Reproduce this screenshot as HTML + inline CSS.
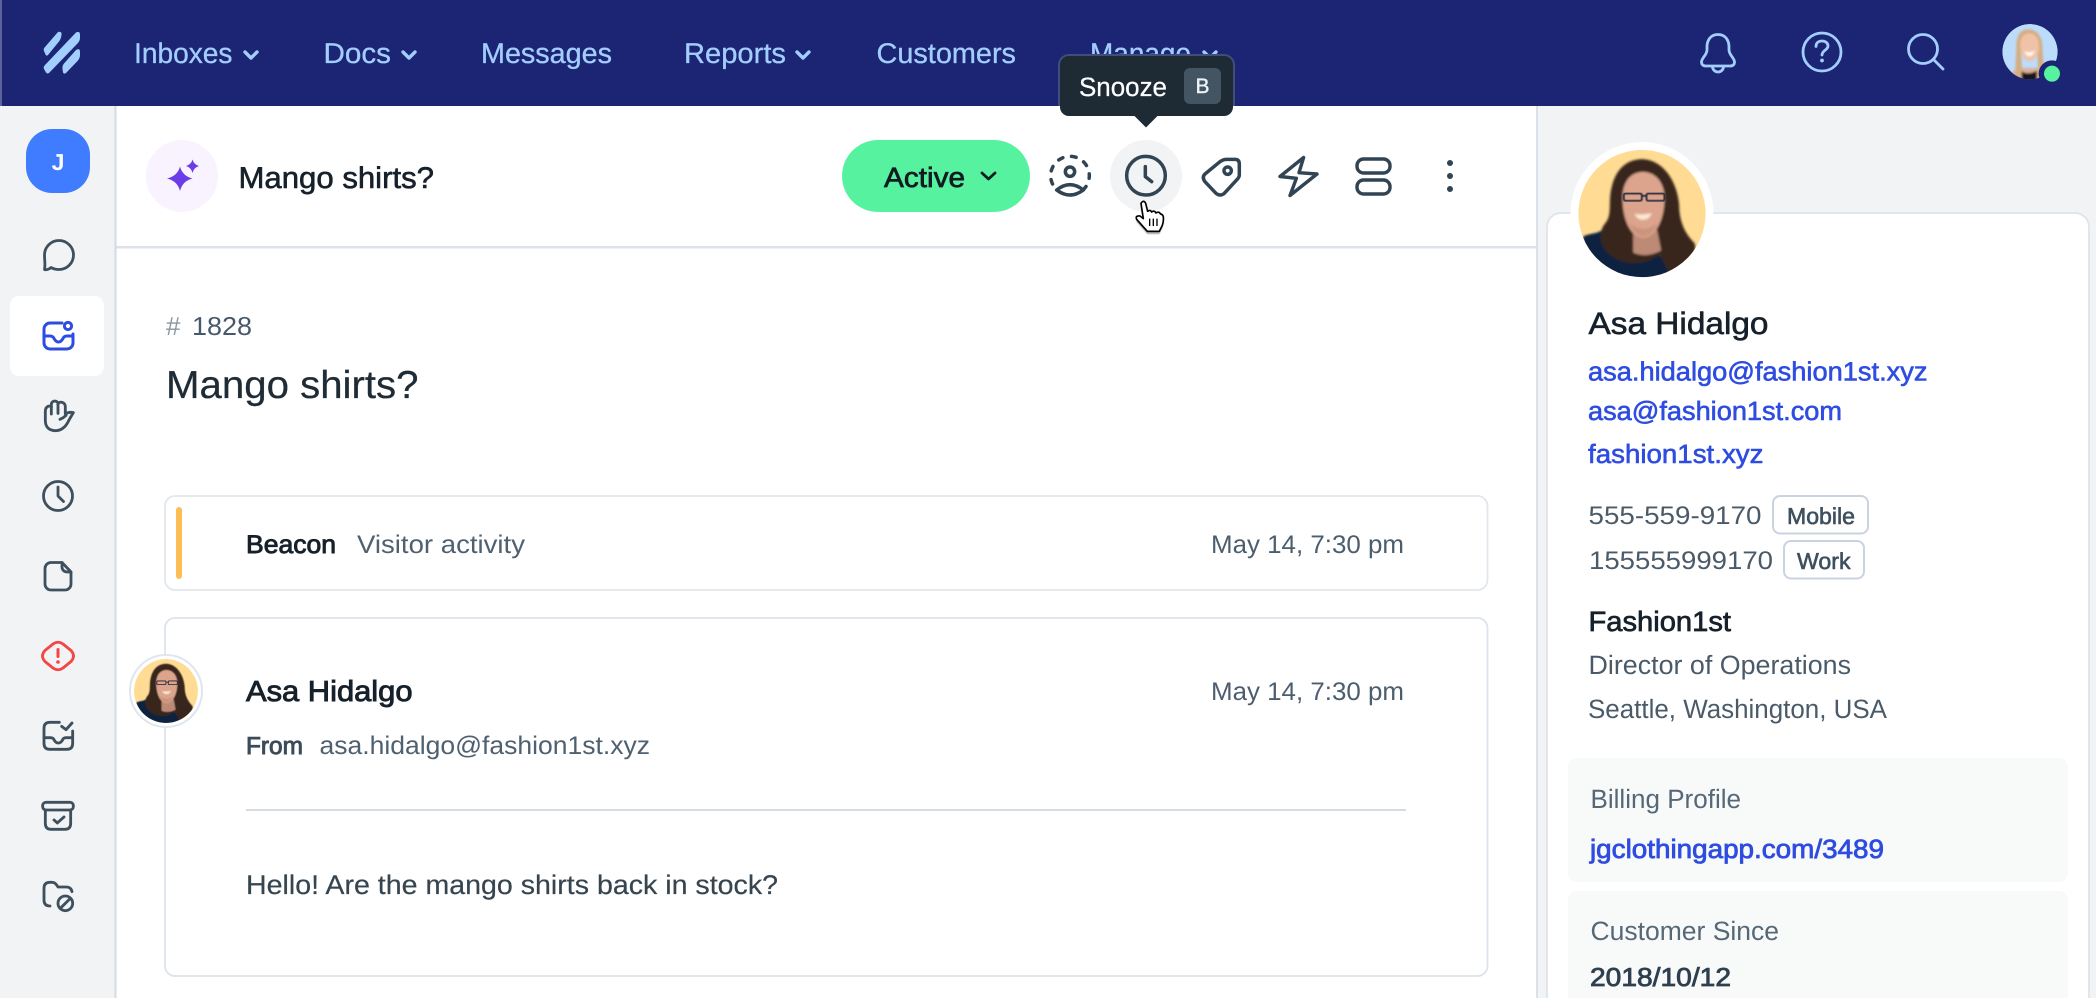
<!DOCTYPE html>
<html lang="en"><head><meta charset="utf-8"><title>Mango shirts?</title>
<style>
html,body{margin:0;padding:0;background:#fff;overflow:hidden;width:2096px;height:998px}
svg{display:block;font-family:"Liberation Sans",sans-serif;text-rendering:geometricPrecision}
.nav{fill:#a3cdfd;stroke:#a3cdfd;stroke-width:.3px;font-size:28.5px}
.m{stroke-width:.6px}
.s{stroke-width:.9px}
.ic{fill:none;stroke:#3e4f5e;stroke-linecap:round;stroke-linejoin:round;stroke-width:2.8}
.tb{fill:none;stroke:#314454;stroke-linecap:round;stroke-linejoin:round;stroke-width:3.4}
.top{fill:none;stroke:#a3cdfd;stroke-linecap:round;stroke-linejoin:round;stroke-width:2.8}
</style></head><body>
<svg width="2096" height="998" viewBox="0 0 2096 998" xmlns="http://www.w3.org/2000/svg">
<defs>
<filter id="b" x="-10%" y="-10%" width="120%" height="120%"><feGaussianBlur stdDeviation="3"/></filter>
<filter id="b1" x="-10%" y="-10%" width="120%" height="120%"><feGaussianBlur stdDeviation="1.2"/></filter>
<filter id="sh" x="-30%" y="-30%" width="160%" height="160%"><feGaussianBlur stdDeviation="1.5"/></filter>
<clipPath id="ca"><circle cx="216.5" cy="221" r="191"/></clipPath>
<clipPath id="cu"><circle cx="105" cy="101" r="83"/></clipPath>
<clipPath id="ttc"><rect x="1050" y="40" width="200" height="66"/></clipPath>
<g id="asa"><g clip-path="url(#ca)">
<circle cx="216.5" cy="221" r="191" fill="#ffdb94"/>
<g filter="url(#b)">
<path d="M40 290C60 280 82 282 94 272L130 340L190 362L260 335L300 382L340 370L376 325L350 440H40Z" fill="#0e2340"/>
<path d="M215 58C166 60 138 92 126 140C114 185 128 222 108 248C84 275 88 318 118 342C150 372 200 376 238 362L270 345L296 396C345 388 386 345 374 310C345 280 328 245 328 195C322 125 280 58 215 58Z" fill="#38281e"/>
<path d="M190 270H262L274 332C245 348 212 350 190 338Z" fill="#bd8a75"/>
<path d="M218 96C178 98 158 130 158 175C158 238 182 294 220 294C258 294 284 238 284 175C284 130 258 96 218 96Z" fill="#dca48c"/>
<path d="M194 222Q220 226 246 220Q238 240 220 240Q202 240 194 222Z" fill="#fbe6d2"/>
<path d="M180 250Q220 284 262 250Q250 288 220 290Q192 288 180 250Z" fill="#cc947c"/>
</g>
<g filter="url(#b1)" fill="none" stroke="#1e2236">
<rect x="162" y="161" width="54" height="22" rx="5" stroke-width="5"/>
<rect x="230" y="161" width="54" height="22" rx="5" stroke-width="5"/>
<path d="M216 168H230" stroke-width="5"/>
</g>
</g></g>
</defs>

<rect width="2096" height="998" fill="#fff"/>
<!-- sidebar -->
<rect x="0" y="106" width="115" height="892" fill="#f1f3f5"/>
<rect x="114.500" y="106" width="2" height="892" fill="#d2dbe6"/>
<!-- right column -->
<rect x="1536" y="106" width="560" height="892" fill="#f1f3f5"/>
<rect x="1536" y="106" width="2" height="892" fill="#dbe1e8"/>
<rect x="1547" y="213" width="542" height="800" rx="14" fill="#fff" stroke="#e2e5e9" stroke-width="2"/>
<!-- top nav -->
<rect width="2096" height="106" fill="#1b2573"/>
<rect width="2" height="106" fill="#5c639f"/>
<g fill="#a2cffe">
<path d="M58 32Q62 31 61.500 35Q61 39 59 41.500L48 55Q46.500 56.500 45.500 54.500L44 51Q43 49 45 47Z"/>
<path d="M76 32.500Q80 30.500 80 35V38Q80 41 77 44L49.500 72.500Q47.500 74.500 46 72.500L44 69Q43 67 45 65Z"/>
<path d="M76 50Q80 47.500 80 52V55Q80 58 78 60.500L66 73Q64 74.500 63 72.500L62.500 69Q62 66 64 63.500Z"/>
</g>
<text class="nav" x="134" y="63" textLength="98.500" lengthAdjust="spacingAndGlyphs">Inboxes</text>
<text class="nav" x="323.500" y="63" textLength="67.500" lengthAdjust="spacingAndGlyphs">Docs</text>
<text class="nav" x="481" y="63" textLength="131" lengthAdjust="spacingAndGlyphs">Messages</text>
<text class="nav" x="684" y="63" textLength="102" lengthAdjust="spacingAndGlyphs">Reports</text>
<text class="nav" x="876.500" y="63" textLength="139.500" lengthAdjust="spacingAndGlyphs">Customers</text>
<text class="nav" x="1090" y="63" textLength="101" lengthAdjust="spacingAndGlyphs">Manage</text>
<g fill="none" stroke="#a3cdfd" stroke-width="3.4" stroke-linecap="round" stroke-linejoin="round">
<path d="M245 52L251 58L257 52"/><path d="M403 52L409 58L415 52"/><path d="M797 52L803 58L809 52"/><path d="M1204 52L1210 58L1216 52"/>
</g>
<!-- top right icons -->
<path class="top" d="M1718 34.500C1710 34.500 1707 41 1707 47V50C1707 55 1701.500 58 1701.500 62C1701.500 64.500 1703 66 1706 66H1730C1733 66 1734.500 64.500 1734.500 62C1734.500 58 1729 55 1729 50V47C1729 41 1726 34.500 1718 34.500Z"/>
<path class="top" d="M1712.500 66.500A5.500 5.500 0 0 0 1723.500 66.500"/>
<circle class="top" cx="1822" cy="52" r="19"/>
<path class="top" d="M1816 46.500C1816 42.500 1819 41 1822 41C1825.500 41 1828 43 1828 46C1828 50 1822 50.500 1822 55"/>
<circle cx="1822" cy="60.500" r="1.900" fill="#a3cdfd"/>
<circle class="top" cx="1923" cy="49" r="14.500"/>
<path class="top" d="M1934 60L1943 69"/>
<!-- user avatar -->
<g transform="translate(1995 18) scale(.3333)">
<g clip-path="url(#cu)">
<circle cx="105" cy="101" r="83" fill="#bcdcfb"/>
<g filter="url(#b)">
<path d="M40 190Q50 150 80 150H125Q155 155 170 190Z" fill="#e0b097"/>
<path d="M100 34C74 34 64 56 64 85C64 115 60 145 62 178H84Q78 130 78 90H126Q130 130 128 178H150C148 140 142 112 142 85C142 56 126 34 100 34Z" fill="#d5ad80"/>
<path d="M104 46C84 46 74 62 76 88C78 112 90 130 103 130C118 130 132 112 132 88C132 62 122 46 104 46Z" fill="#f0c3a8"/>
<path d="M88 100Q104 108 120 98Q114 114 104 114Q94 114 88 100Z" fill="#fff"/>
<path d="M80 160Q100 172 126 158V190H80Z" fill="#14181c"/>
</g></g>
<circle cx="171" cy="167" r="40" fill="#1b2573"/>
<circle cx="171" cy="167" r="24" fill="#56f2a0"/>
</g>
<!-- sidebar content -->
<rect x="26" y="129" width="64" height="64" rx="26" fill="#3f7cff"/>
<text x="58" y="170" text-anchor="middle" font-size="23" font-weight="700" fill="#fff">J</text>
<rect x="10" y="296" width="94" height="80" rx="9" fill="#fff"/>
<path class="ic" d="M51 267.500C49 269.500 46 270 44.500 269.500C45.500 265 44.500 260 44.500 255A14.500 14.500 0 1 1 59 269.500C56 269.500 53.500 269 51 267.500Z"/>
<g fill="none" stroke="#2e4de0" stroke-width="3" stroke-linecap="round" stroke-linejoin="round">
<path d="M62 323H50A6 6 0 0 0 44 329V343A6 6 0 0 0 50 349H67A6 6 0 0 0 73 343V334"/>
<path d="M44 336H50Q53 336 54 338.500Q56 342 58.500 342Q61 342 63 338.500Q64 336 67 336H73"/>
<circle cx="68" cy="326" r="3.600"/>
</g>
<g transform="translate(30 390) scale(.3333)" class="ic" style="stroke-width:8.500">
<path d="M46 92V64C46 48 62 44 64 52V44C64 30 84 30 84 42C88 32 106 36 106 50V72C112 68 122 66 130 68C124 78 120 84 114 96C106 112 92 122 78 122C58 122 46 112 46 92Z"/>
<path d="M64 50V72M84 42V70M90 88Q100 84 108 76"/>
</g>
<circle class="ic" cx="58" cy="496" r="14.500"/>
<path class="ic" d="M58 487V496L63.500 501.500"/>
<path class="ic" d="M62 562.500H51A6 6 0 0 0 45 568.500V584A6 6 0 0 0 51 590H65A6 6 0 0 0 71 584V572Z"/>
<path class="ic" d="M62 562.500V567A5 5 0 0 0 67 572H71"/>
<path d="M53 644Q58 640.500 63 644L71 650.500Q76 656 71 661.500L63 668Q58 671.500 53 668L45 661.500Q40 656 45 650.500Z" fill="none" stroke="#f54545" stroke-width="2.800" stroke-linejoin="round"/>
<path d="M58 649.500V656.500" stroke="#f54545" stroke-width="3" stroke-linecap="round"/>
<circle cx="58" cy="662" r="1.800" fill="#f54545"/>
<g transform="translate(30 715) scale(.3333)" class="ic" style="stroke-width:8.500">
<path d="M88 22H60Q42 22 42 40V85Q42 103 60 103H110Q128 103 128 85V48"/>
<path d="M42 68H62Q70 68 73 76Q78 84 85 84Q92 84 97 76Q100 68 108 68H128"/>
<path d="M95 34L108 44L126 24"/>
<rect x="38" y="262" width="92" height="23" rx="10"/>
<path d="M46 285V325Q46 343 64 343H104Q122 343 122 325V285"/>
<path d="M72 315L82 324L102 306"/>
<path d="M60 573Q42 573 42 555V520Q42 502 60 502H66Q74 502 80 510L84 516H108Q124 516 126 530"/>
<circle cx="106" cy="565" r="22"/>
<path d="M91 580L121 550"/>
</g>
<!-- conversation header -->
<rect x="116.500" y="246" width="1419.500" height="2.500" fill="#dde2e7"/>
<circle cx="182" cy="176" r="36" fill="#f8f3fe"/>
<path d="M180 166.500Q182.500 176 192.500 178.500Q182.500 181 180 191Q177.500 181 167 178.500Q177.500 176 180 166.500Z" fill="#6c3ce9"/>
<path d="M192.500 159.500Q193.800 164.500 199 166Q193.800 167.500 192.500 173Q191.200 167.500 186 166Q191.200 164.500 192.500 159.500Z" fill="#6c3ce9"/>
<text class="m" x="238.500" y="188" font-size="30" textLength="195.500" lengthAdjust="spacingAndGlyphs" fill="#17212b" stroke="#17212b">Mango shirts?</text>
<rect x="842" y="140" width="188" height="72" rx="36" fill="#56f2a0"/>
<text x="884" y="187" font-size="28" textLength="81" lengthAdjust="spacingAndGlyphs" fill="#101c22" stroke="#101c22" stroke-width=".7">Active</text>
<path d="M982 173L988.500 179L995 173" fill="none" stroke="#101c22" stroke-width="2.800" stroke-linecap="round" stroke-linejoin="round"/>
<circle cx="1146" cy="176" r="36" fill="#f1f3f5"/>
<g transform="translate(1040 140) scale(.3333)" class="tb" style="stroke-width:10.500">
<circle cx="90" cy="107" r="58" stroke-dasharray="14 26.500" stroke-dashoffset="6"/>
<circle cx="90" cy="95" r="14"/>
<path d="M50 150Q90 118 130 150Q90 180 50 150Z"/>
<circle cx="318" cy="107" r="58"/>
<path d="M316 80V110L335 125"/>
<path d="M560 58H585Q598 58 598 72V105Q598 112 590 120L553 160Q540 170 528 160L495 125Q485 112 495 102L540 65Q550 58 560 58Z"/>
<circle cx="563" cy="92" r="11"/>
</g>
<path class="tb" d="M1303.600 157.500L1280 176.500L1296.400 178.300L1290 195.500L1317 174L1299 172.700Z"/>
<rect class="tb" x="1357" y="159" width="33" height="14" rx="6.500"/>
<rect class="tb" x="1357" y="180" width="33" height="14" rx="6.500"/>
<circle cx="1450" cy="163" r="3" fill="#314454"/><circle cx="1450" cy="176" r="3" fill="#314454"/><circle cx="1450" cy="189" r="3" fill="#314454"/>
<!-- cursor -->
<g transform="translate(1040 140) scale(.3333)">
<path d="M303 190Q311 178 317 190L323 214Q331 208 335 216Q343 210 348 219Q356 213 362 222Q368 223 370 230Q372 250 362 266L358 274H322L290 238Q285 226 300 228L310 236Z" fill="#000" opacity=".35" transform="translate(0 8)" filter="url(#sh)"/>
<path d="M303 190Q311 178 317 190L323 214Q331 208 335 216Q343 210 348 219Q356 213 362 222Q368 223 370 230Q372 250 362 266L358 274H322L290 238Q285 226 300 228L310 236Z" fill="#fff" stroke="#000" stroke-width="5" stroke-linejoin="round"/>
<path d="M329 236V258M340 236V258M351 236V258" stroke="#000" stroke-width="4"/>
</g>
<!-- tooltip -->
<rect x="1058" y="54" width="177" height="70" rx="11" fill="#414d7a" clip-path="url(#ttc)"/>
<rect x="1060" y="56" width="173" height="60" rx="9" fill="#1e2b35"/>
<path d="M1134 115.500H1158L1146 127.500Z" fill="#1e2b35"/>
<text x="1079" y="96" font-size="26.500" textLength="88" lengthAdjust="spacingAndGlyphs" fill="#fff" stroke="#fff" stroke-width=".25">Snooze</text>
<rect x="1184" y="68" width="37" height="36" rx="6" fill="#435563"/>
<text x="1202.500" y="93" text-anchor="middle" font-size="21" fill="#eef2f5" stroke="#eef2f5" stroke-width=".4">B</text>
<!-- conversation -->
<text x="166" y="335" font-size="26" fill="#8a97a3">#</text>
<text x="192" y="335" font-size="26" textLength="60" lengthAdjust="spacingAndGlyphs" fill="#46586a">1828</text>
<text x="166" y="398" font-size="39" textLength="252.500" lengthAdjust="spacingAndGlyphs" fill="#1f2c36" stroke="#1f2c36" stroke-width=".25">Mango shirts?</text>
<rect x="165" y="496" width="1322.500" height="94" rx="10" fill="#fff" stroke="#e2e7ed" stroke-width="1.800"/>
<rect x="176" y="507" width="6" height="72" rx="3" fill="#fdbe55"/>
<text class="s" x="246" y="553" font-size="25.500" textLength="90" lengthAdjust="spacingAndGlyphs" fill="#17212b" stroke="#17212b">Beacon</text>
<text x="357" y="553" font-size="25.500" textLength="168" lengthAdjust="spacingAndGlyphs" fill="#4f6070">Visitor activity</text>
<text x="1211" y="553" font-size="25.500" textLength="193" lengthAdjust="spacingAndGlyphs" fill="#4c5e6e">May 14, 7:30 pm</text>
<rect x="165" y="618" width="1322.500" height="358" rx="10" fill="#fff" stroke="#dde3eb" stroke-width="1.800"/>
<circle cx="166" cy="691" r="36" fill="#fff" stroke="#e0e6ec" stroke-width="2"/>
<use href="#asa" transform="translate(166 691) scale(.1675) translate(-216.500 -221)"/>
<text class="s" x="246" y="701" font-size="29" textLength="166.500" lengthAdjust="spacingAndGlyphs" fill="#17212b" stroke="#17212b">Asa Hidalgo</text>
<text x="1211" y="700" font-size="25.500" textLength="193" lengthAdjust="spacingAndGlyphs" fill="#4c5e6e">May 14, 7:30 pm</text>
<text class="s" x="246" y="754" font-size="24.500" textLength="57" lengthAdjust="spacingAndGlyphs" fill="#3a4b5a" stroke="#3a4b5a">From</text>
<text x="319.500" y="754" font-size="25.500" textLength="330.500" lengthAdjust="spacingAndGlyphs" fill="#4f6070">asa.hidalgo@fashion1st.xyz</text>
<rect x="246" y="809" width="1160" height="2" fill="#d5dce4"/>
<text x="246" y="894" font-size="27" textLength="532" lengthAdjust="spacingAndGlyphs" fill="#36454f" stroke="#36454f" stroke-width=".2">Hello! Are the mango shirts back in stock?</text>
<!-- right profile -->
<circle cx="1642" cy="213.500" r="71.500" fill="#fff"/>
<use href="#asa" transform="translate(1642 213.500) scale(.3333) translate(-216.500 -221)"/>
<text class="m" x="1588.500" y="334" font-size="31" textLength="180" lengthAdjust="spacingAndGlyphs" fill="#17212b" stroke="#17212b">Asa Hidalgo</text>
<g fill="#2e4de0" font-size="26.500">
<text class="m" stroke="#2e4de0" x="1588" y="380.500" textLength="339.500" lengthAdjust="spacingAndGlyphs">asa.hidalgo@fashion1st.xyz</text>
<text class="m" stroke="#2e4de0" x="1588" y="420" textLength="254" lengthAdjust="spacingAndGlyphs">asa@fashion1st.com</text>
<text class="m" stroke="#2e4de0" x="1588" y="463" textLength="175.500" lengthAdjust="spacingAndGlyphs">fashion1st.xyz</text>
</g>
<text x="1588.500" y="524" font-size="25.500" textLength="173" lengthAdjust="spacingAndGlyphs" fill="#4a5a68">555-559-9170</text>
<rect x="1773" y="496" width="95" height="37.500" rx="7" fill="#fff" stroke="#c9d4e0" stroke-width="2"/>
<text class="m" x="1787" y="524" font-size="23" textLength="68" lengthAdjust="spacingAndGlyphs" fill="#3e4f5e" stroke="#3e4f5e">Mobile</text>
<text x="1589" y="569" font-size="25.500" textLength="184" lengthAdjust="spacingAndGlyphs" fill="#4a5a68">155555999170</text>
<rect x="1784" y="541" width="80" height="37.500" rx="7" fill="#fff" stroke="#c9d4e0" stroke-width="2"/>
<text class="m" x="1797" y="569" font-size="23" textLength="53.500" lengthAdjust="spacingAndGlyphs" fill="#3e4f5e" stroke="#3e4f5e">Work</text>
<text class="s" x="1588.500" y="631" font-size="28" textLength="142.500" lengthAdjust="spacingAndGlyphs" fill="#17212b" stroke="#17212b" style="stroke-width:.7px">Fashion1st</text>
<text x="1588.500" y="674" font-size="26.500" textLength="262.500" lengthAdjust="spacingAndGlyphs" fill="#4a5a68">Director of Operations</text>
<text x="1588" y="718" font-size="26.500" textLength="299" lengthAdjust="spacingAndGlyphs" fill="#4a5a68">Seattle, Washington, USA</text>
<rect x="1568" y="758" width="500" height="124" rx="9" fill="#f8fafa"/>
<text x="1590.500" y="808" font-size="26.500" textLength="150.500" lengthAdjust="spacingAndGlyphs" fill="#566778">Billing Profile</text>
<text x="1590" y="858" font-size="26.500" textLength="294" lengthAdjust="spacingAndGlyphs" fill="#2e4de0" stroke="#2e4de0" stroke-width=".8">jgclothingapp.com/3489</text>
<rect x="1568" y="891" width="500" height="120" rx="9" fill="#f8fafa"/>
<text x="1590.500" y="940" font-size="26.500" textLength="188.500" lengthAdjust="spacingAndGlyphs" fill="#566778">Customer Since</text>
<text x="1590" y="986" font-size="26" textLength="141" lengthAdjust="spacingAndGlyphs" fill="#2e3f4f" stroke="#2e3f4f" stroke-width=".8">2018/10/12</text>
</svg>
</body></html>
